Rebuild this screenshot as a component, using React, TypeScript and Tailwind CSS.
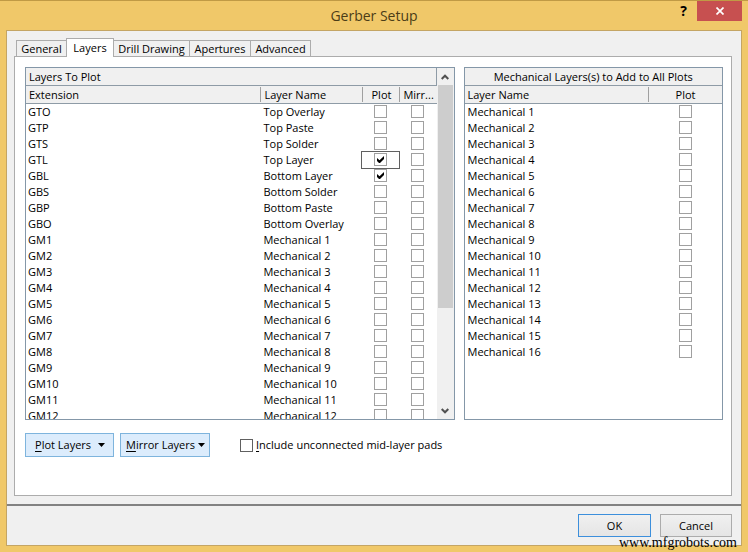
import { useState } from "react";

type Layer = { ext: string; name: string };

const mechanical = Array.from({ length: 16 }, (_, i) => `Mechanical ${i + 1}`);

const plotLayers: Layer[] = [
  { ext: "GTO", name: "Top Overlay" },
  { ext: "GTP", name: "Top Paste" },
  { ext: "GTS", name: "Top Solder" },
  { ext: "GTL", name: "Top Layer" },
  { ext: "GBL", name: "Bottom Layer" },
  { ext: "GBS", name: "Bottom Solder" },
  { ext: "GBP", name: "Bottom Paste" },
  { ext: "GBO", name: "Bottom Overlay" },
  ...mechanical.slice(0, 12).map((name, i) => ({ ext: `GM${i + 1}`, name })),
];

const tabs = ["General", "Layers", "Drill Drawing", "Apertures", "Advanced"];

function Tick({ label, checked = false }: { label: string; checked?: boolean }) {
  const [on, setOn] = useState(checked);
  return (
    <span className="mx-auto mt-px grid size-[13px]">
      <input
        type="checkbox"
        aria-label={label}
        checked={on}
        onChange={() => setOn(!on)}
        className="col-start-1 row-start-1 size-[13px] appearance-none border border-[#a0a0a0] bg-white"
      />
      {on && (
        <svg viewBox="0 0 13 13" className="pointer-events-none col-start-1 row-start-1 size-[13px]">
          <path d="M3 5v3l2 2h1l4-4V3L5.5 7.2z" fill="#000" />
        </svg>
      )}
    </span>
  );
}

function Head({ children, divided = false, center = false }: { children: string; divided?: boolean; center?: boolean }) {
  return (
    <th className="h-[18px] border-b border-[#8e9ba6] bg-[#f0f0f0] p-0 text-left font-normal">
      <span
        className={`block h-[15px] truncate leading-[15px] ${divided ? "border-l border-[#a0a0a0]" : ""} ${center ? "text-center" : "pl-[3px]"}`}
      >
        {children}
      </span>
    </th>
  );
}

function Chevron({ up = false }: { up?: boolean }) {
  return (
    <svg viewBox="0 0 8 6" className="h-[6px] w-2" fill="none" stroke="#505050" strokeWidth="2">
      <path d={up ? "M0.7 5L4 1.7L7.3 5" : "M0.7 1L4 4.3L7.3 1"} />
    </svg>
  );
}

function MenuButton({ first, rest, className }: { first: string; rest: string; className: string }) {
  return (
    <button type="button" className={`flex h-6 items-center justify-between border border-[#7eb4dd] bg-[#dcecfc] ${className}`}>
      <span>
        <u className="underline-offset-2">{first}</u>
        {rest}
      </span>
      <svg viewBox="0 0 7 4" className="h-1 w-[7px]" fill="#000">
        <path d="M0 0h7L3.5 4z" />
      </svg>
    </button>
  );
}

export default function App() {
  const [include, setInclude] = useState(false);
  return (
    <div
      className="relative flex min-h-screen flex-col border-t border-[#c09a45] bg-[#f0c869] px-[6px] pb-[6px] text-[11px] leading-4 text-black"
      style={{ fontFamily: '"Open Sans", "Noto Sans", sans-serif' }}
    >
      <header className="grid h-[29px] grid-cols-[1fr_auto_1fr] items-center">
        <h1 className="col-start-2 text-[14px] leading-5 text-[#4b3c17]">Gerber Setup</h1>
        <div className="flex items-start justify-end gap-[10px] self-start">
          <button type="button" aria-label="Help" className="h-5 text-[14px] font-bold leading-5">
            ?
          </button>
          <button type="button" aria-label="Close" className="grid h-5 w-[45px] place-items-center bg-[#c75050]">
            <svg viewBox="0 0 8 8" className="size-2" stroke="#fff" strokeWidth="1.7">
              <path d="M0.5 0.5L7.5 7.5M7.5 0.5L0.5 7.5" />
            </svg>
          </button>
        </div>
      </header>

      <form className="flex grow flex-col border border-[#c4a564] bg-[#f0f0f0]" onSubmit={(e) => e.preventDefault()}>
        <main className="flex grow flex-col border-b-2 border-[#828282] pt-[7px] pr-[9px] pb-2 pl-[7px]">
          <div role="tablist" className="z-10 -mb-px flex items-end pl-[2px]">
            {tabs.map((tab) =>
              tab === "Layers" ? (
                <button
                  key={tab}
                  type="button"
                  role="tab"
                  aria-selected="true"
                  className="h-[19px] w-12 border border-b-0 border-[#acacac] bg-white text-center"
                >
                  {tab}
                </button>
              ) : (
                <button
                  key={tab}
                  type="button"
                  role="tab"
                  aria-selected="false"
                  className={`h-[17px] border border-[#acacac] bg-[#f0f0f0] text-center leading-[15px] ${
                    tab === "General"
                      ? "w-[50px] border-r-0"
                      : tab === "Drill Drawing"
                        ? "w-[76px] border-l-0"
                        : tab === "Apertures"
                          ? "w-[61px] border-l-0"
                          : "w-[60px] border-l-0"
                  }`}
                >
                  {tab}
                </button>
              ),
            )}
          </div>

          <section role="tabpanel" className="grow border border-[#acacac] bg-white pt-[10px] pr-[8px] pl-[10px]">
            <div className="flex gap-[9px]">
              <div className="flex h-[353px] min-w-0 flex-[430] overflow-hidden border border-[#8497a8]">
                <div className="min-w-0 grow overflow-hidden">
                  <table className="w-full table-fixed border-separate border-spacing-0">
                    <colgroup>
                      <col />
                      <col className="w-[102px]" />
                      <col className="w-[37px]" />
                      <col className="w-[37px]" />
                    </colgroup>
                    <thead>
                      <tr>
                        <th
                          colSpan={4}
                          className="h-[18px] border-r border-b border-[#8e9ba6] bg-[#f0f0f0] p-0 pl-[3px] text-left leading-[17px] font-normal"
                        >
                          Layers To Plot
                        </th>
                      </tr>
                      <tr>
                        <Head>Extension</Head>
                        <Head divided>Layer Name</Head>
                        <Head divided center>Plot</Head>
                        <Head divided>Mirr...</Head>
                      </tr>
                    </thead>
                    <tbody className="align-top leading-[15px]">
                      {plotLayers.map(({ ext, name }) => (
                        <tr key={ext}>
                          <td className="h-4 p-0 pl-[2px]">{ext}</td>
                          <td className="h-4 p-0 pl-[3px]">{name}</td>
                          <td className={`h-4 p-0 ${ext === "GTL" ? "outline outline-[#606060]" : ""}`}>
                            <Tick label={`Plot ${name}`} checked={ext === "GTL" || ext === "GBL"} />
                          </td>
                          <td className="h-4 p-0">
                            <Tick label={`Mirror ${name}`} />
                          </td>
                        </tr>
                      ))}
                    </tbody>
                  </table>
                </div>
                <div className="flex w-[17px] shrink-0 flex-col items-center bg-[#f0f0f0]">
                  <button type="button" aria-label="Scroll up" className="grid h-[17px] w-full shrink-0 place-items-center">
                    <Chevron up />
                  </button>
                  <div className="h-[223px] w-[15px] bg-[#cdcdcd]" />
                  <button type="button" aria-label="Scroll down" className="mt-auto grid h-4 w-full place-items-center">
                    <Chevron />
                  </button>
                </div>
              </div>

              <div className="h-[353px] min-w-0 flex-[259] overflow-hidden border border-[#8497a8]">
                <table className="w-full table-fixed border-separate border-spacing-0">
                  <colgroup>
                    <col />
                    <col className="w-[74px]" />
                  </colgroup>
                  <thead>
                    <tr>
                      <th
                        colSpan={2}
                        className="h-[18px] border-b border-[#8e9ba6] bg-[#f0f0f0] p-0 text-center leading-[17px] font-normal"
                      >
                        Mechanical Layers(s) to Add to All Plots
                      </th>
                    </tr>
                    <tr>
                      <Head>Layer Name</Head>
                      <Head divided center>Plot</Head>
                    </tr>
                  </thead>
                  <tbody className="align-top leading-[15px]">
                    {mechanical.map((name) => (
                      <tr key={name}>
                        <td className="h-4 p-0 pl-[3px]">{name}</td>
                        <td className="h-4 p-0">
                          <Tick label={`Add ${name} to all plots`} />
                        </td>
                      </tr>
                    ))}
                  </tbody>
                </table>
              </div>
            </div>

            <div className="mt-[13px] flex items-center">
              <MenuButton first="P" rest="lot Layers" className="w-[89px] pr-2 pl-[9px]" />
              <MenuButton first="M" rest="irror Layers" className="ml-[6px] w-[90px] pr-[4px] pl-[5px]" />
              <input
                id="include-pads"
                type="checkbox"
                checked={include}
                onChange={() => setInclude(!include)}
                className="ml-[30px] size-[13px] appearance-none border border-[#606060] bg-white checked:bg-[#606060]"
              />
              <label htmlFor="include-pads" className="ml-[3px]">
                <u className="underline-offset-2">I</u>nclude unconnected mid-layer pads
              </label>
            </div>
          </section>
        </main>

        <footer className="flex h-[39px] justify-end gap-[9px] pt-[8px] pr-[9px]">
          <button
            type="submit"
            className="h-[23px] w-[73px] border border-[#3c8fdc] bg-linear-to-b from-[#f0f0f0] to-[#e5e5e5]"
          >
            OK
          </button>
          <button
            type="button"
            className="h-[23px] w-[72px] border border-[#acacac] bg-linear-to-b from-[#f0f0f0] to-[#e5e5e5]"
          >
            Cancel
          </button>
        </footer>
      </form>

      <span
        className="absolute right-[11px] bottom-0 text-[14px] leading-[18px]"
        style={{ fontFamily: '"Liberation Serif", serif' }}
      >
        www.mfgrobots.com
      </span>
    </div>
  );
}
